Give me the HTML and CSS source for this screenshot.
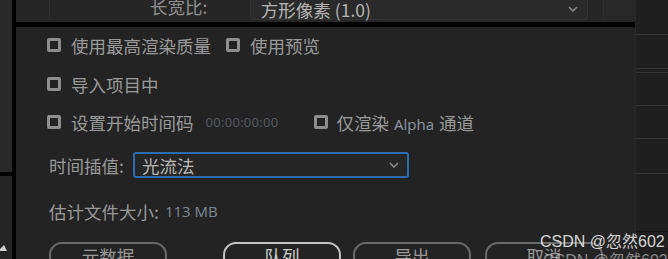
FILE: index.html
```html
<!DOCTYPE html>
<html lang="zh-CN">
<head>
    <meta charset="UTF-8">
    <title>导出设置</title>
    <link rel="stylesheet" href="styles.css">
</head>
<body>
    <div class="app">
        <aside class="side-left">
            <div class="side-top"></div>
            <div class="side-bottom">
                <svg class="corner" width="10" height="10" viewBox="0 0 10 10"><polygon points="0,9 6,3 9,9" fill="#cfcfcf"/></svg>
            </div>
        </aside>

        <main class="dialog">
            <div class="topbar">
                <div class="topbar-divider"></div>
                <span class="top-label">长宽比:</span>
                <div class="top-select">
                    <span>方形像素 (1.0)</span>
                    <svg class="chevron" width="10" height="6" viewBox="0 0 10 6"><polyline points="1,1 5,5 9,1" fill="none" stroke="#8c8c8c" stroke-width="1.5"/></svg>
                </div>
                <div class="top-block"></div>
            </div>

            <div class="panel">
                <div class="row row-1">
                    <label class="check"><span class="box"></span>使用最高渲染质量</label>
                    <label class="check check-preview"><span class="box"></span>使用预览</label>
                </div>
                <div class="row row-2">
                    <label class="check"><span class="box"></span>导入项目中</label>
                </div>
                <div class="row row-3">
                    <label class="check"><span class="box"></span>设置开始时间码</label>
                    <span class="timecode">00:00:00:00</span>
                    <label class="check check-alpha"><span class="box"></span><span>仅渲染<span class="latin">Alpha</span>通道</span></label>
                </div>
                <div class="row row-4">
                    <span class="field-label">时间插值:</span>
                    <div class="select">
                        <span>光流法</span>
                        <svg class="chevron" width="10" height="6" viewBox="0 0 10 6"><polyline points="1,1 5,5 9,1" fill="none" stroke="#8c8c8c" stroke-width="1.5"/></svg>
                    </div>
                </div>
                <div class="row row-5">
                    <span>估计文件大小:</span>
                    <span class="size">113 MB</span>
                </div>
                <div class="buttons">
                    <button class="btn btn-meta">元数据</button>
                    <button class="btn btn-queue">队列</button>
                    <button class="btn btn-export">导出</button>
                    <button class="btn btn-cancel">取消</button>
                </div>
            </div>
        </main>

        <aside class="side-right">
            <div class="line l1"></div>
            <div class="line l2"></div>
            <div class="line l3"></div>
            <div class="line l4"></div>
            <div class="line l5"></div>
            <div class="line l6"></div>
            <div class="line l7"></div>
        </aside>
    </div>

    <div class="watermark">CSDN @忽然602</div>
    <div class="watermark watermark-ghost">CSDN @忽然602</div>
</body>
</html>
```

FILE: styles.css
```css
/* Page */
body {
    margin: 0;
    width: 668px;
    height: 259px;
    overflow: hidden;
    position: relative;
    background-color: #232323;
    font-family: "Noto Sans CJK SC", "Noto Sans", sans-serif;
    color: #9a9a9a;
}

.app {
    display: flex;
    height: 259px;
}

/* Left strip */
.side-left {
    width: 12px;
    flex: none;
    border-right: 4px solid #000;
    display: flex;
    flex-direction: column;
}

.side-top {
    height: 172px;
    flex: none;
    background-color: #292929;
    border-bottom: 4px solid #000;
}

.side-bottom {
    flex: 1;
    background-color: #252525;
    position: relative;
}

.corner {
    position: absolute;
    left: -2px;
    top: 66px;
}

/* Main dialog */
.dialog {
    width: 619px;
    flex: none;
    display: flex;
    flex-direction: column;
    overflow: hidden;
}

.topbar {
    height: 22px;
    flex: none;
    border-bottom: 5px solid #000;
    background-color: #262626;
    display: flex;
    align-items: flex-start;
    overflow: hidden;
}

.topbar-divider {
    width: 1px;
    height: 20px;
    margin-left: 33px;
    background-color: #2f2f2f;
}

.top-label {
    width: 100px;
    margin-left: 100px;
    font-size: 17.5px;
    line-height: 17px;
    margin-top: -2px;
    color: #8f8f8f;
}

.top-select {
    width: 352px;
    height: 27px;
    margin-top: -7px;
    margin-left: 4px;
    box-sizing: border-box;
    background-color: #2a2a2a;
    border: 1px solid #333;
    border-radius: 3px;
    display: flex;
    align-items: center;
    justify-content: space-between;
    padding: 5px 9px 0 10px;
    font-size: 17.5px;
    color: #b4b4b4;
}

.top-block {
    width: 32px;
    height: 20px;
    margin-left: 15px;
    border-left: 1px solid #2f2f2f;
    background-color: #282828;
}

.panel {
    flex: none;
    padding: 6px 0 0 31px;
    font-size: 17.5px;
}

/* Rows */
.row {
    display: flex;
    align-items: center;
    height: 24px;
}

.row-2 { margin-top: 15px; }
.row-3 { margin-top: 14px; }
.row-4 { margin-top: 18px; height: 26px; padding-left: 2px; }
.row-5 { margin-top: 21px; padding-left: 2px; }

.check {
    display: flex;
    align-items: center;
    gap: 10px;
}

.box {
    flex: none;
    display: block;
    width: 14px;
    height: 14px;
    box-sizing: border-box;
    border: 3px solid #8e8e8e;
    border-radius: 2px;
}

.check-preview { margin-left: 15px; }
.check-alpha { margin-left: 35px; gap: 9px; }

.timecode {
    margin-left: 12px;
    font-family: "Open Sans", sans-serif;
    font-size: 13px;
    color: #555b63;
    letter-spacing: 0.3px;
}

.latin {
    font-family: "Open Sans", sans-serif;
    font-size: 15px;
    color: #8f98a3;
    margin: 0 5px;
}

.field-label {
    width: 84px;
}

.select {
    width: 276px;
    height: 26px;
    box-sizing: border-box;
    border: 2px solid #2b6db3;
    border-radius: 3px;
    background-color: #262626;
    display: flex;
    align-items: center;
    justify-content: space-between;
    padding: 0 8px 0 7px;
    color: #b8b8b8;
}

.size {
    margin-left: 6px;
    font-family: "Open Sans", sans-serif;
    font-size: 15px;
    color: #7d8895;
}

/* Buttons */
.buttons {
    display: flex;
    margin-top: 19px;
    padding-left: 2px;
}

.btn {
    width: 118px;
    height: 28px;
    flex: none;
    box-sizing: border-box;
    background: transparent;
    border: 2px solid #6a6a6a;
    border-radius: 13px;
    font-family: "Noto Sans CJK SC", sans-serif;
    font-size: 17.5px;
    line-height: 20px;
    color: #9a9a9a;
    padding: 0;
}

.btn-queue {
    margin-left: 56px;
    border-color: #c4c4c4;
    color: #cfcfcf;
}

.btn-export { margin-left: 12px; }
.btn-cancel { margin-left: 14px; }

/* Right strip */
.side-right {
    flex: 1;
    background-color: #1f1f1f;
    border-left: 1px solid #272727;
    position: relative;
}

.line {
    position: absolute;
    left: 0;
    right: 0;
    height: 1px;
    background-color: #353535;
}

.l1 { top: 34px; }
.l2 { top: 68px; }
.l3 { top: 72px; }
.l4 { top: 105px; }
.l5 { top: 138px; }
.l6 { top: 173px; }
.l7 { top: 231px; background-color: #161616; }

/* Watermark */
.watermark {
    position: absolute;
    left: 540px;
    top: 228px;
    font-family: "Liberation Sans", "Noto Sans CJK SC", sans-serif;
    font-size: 16px;
    color: rgba(235, 235, 235, 0.9);
    white-space: nowrap;
}

.watermark-ghost {
    left: 543px;
    top: 247px;
    color: rgba(210, 210, 210, 0.6);
}
```
